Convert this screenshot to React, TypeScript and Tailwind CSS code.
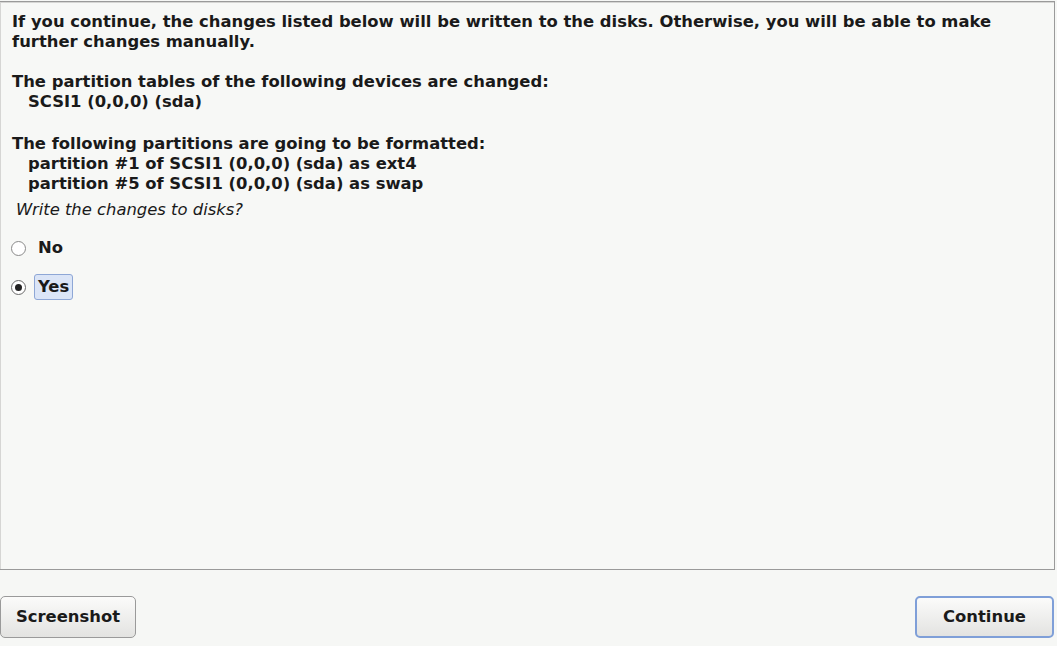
export default function App() {
  return (
    <div
      className="w-[1057px] h-[646px] bg-[#f6f7f5] text-[#1a1a1a] flex flex-col overflow-hidden"
      style={{ fontFamily: '"DejaVu Sans", sans-serif' }}
    >
      <div className="mt-[1px] ml-[-1px] w-[1056px] h-[569px] border border-[#9a9a9a] bg-[#f7f8f6] shadow-[inset_1px_1px_0_#d6d6d4]">
        <div className="pl-[12px] pt-[10px] text-[16.4px] font-bold leading-[20px]">
          <p>
            If you continue, the changes listed below will be written to the disks. Otherwise, you will be able to make
            further changes manually.
          </p>
          <p className="mt-[20px]">The partition tables of the following devices are changed:</p>
          <p className="pl-[16px]">SCSI1 (0,0,0) (sda)</p>
          <p className="mt-[22px]">The following partitions are going to be formatted:</p>
          <p className="pl-[16px]">partition #1 of SCSI1 (0,0,0) (sda) as ext4</p>
          <p className="pl-[16px]">partition #5 of SCSI1 (0,0,0) (sda) as swap</p>
          <p className="mt-[6px] pl-[4px] font-normal italic">Write the changes to disks?</p>
        </div>
        <div className="pl-[11px] mt-[15px] flex flex-col gap-[13px] text-[16.4px] font-bold">
          <div className="flex items-center h-[26px]">
            <span className="w-[15px] h-[15px] rounded-full border border-[#8a8a8a] bg-white" />
            <span className="ml-[12px]">No</span>
          </div>
          <div className="flex items-center h-[26px]">
            <span className="w-[15px] h-[15px] rounded-full border border-[#6a6a6a] bg-white flex items-center justify-center">
              <span className="w-[7px] h-[7px] rounded-full bg-[#222]" />
            </span>
            <span className="ml-[8px] px-[3px] h-[26px] flex items-center rounded-[3px] border border-[#8ea7d6] bg-[#dbe5f7]">
              Yes
            </span>
          </div>
        </div>
      </div>
      <div className="flex justify-between items-center mt-[26px] pr-[3px]">
        <button
          className="w-[136px] h-[42px] rounded-[5px] border border-[#9a9a9a] bg-gradient-to-b from-[#fbfbfa] to-[#e3e3e1] text-[16.4px] font-bold text-[#1a1a1a]"
          style={{ fontFamily: '"DejaVu Sans", sans-serif' }}
        >
          Screenshot
        </button>
        <button
          className="w-[139px] h-[42px] rounded-[5px] border-2 border-[#7f9fd8] bg-gradient-to-b from-[#fbfbfa] to-[#e3e3e1] text-[16.4px] font-bold text-[#1a1a1a]"
          style={{ fontFamily: '"DejaVu Sans", sans-serif' }}
        >
          Continue
        </button>
      </div>
    </div>
  );
}
